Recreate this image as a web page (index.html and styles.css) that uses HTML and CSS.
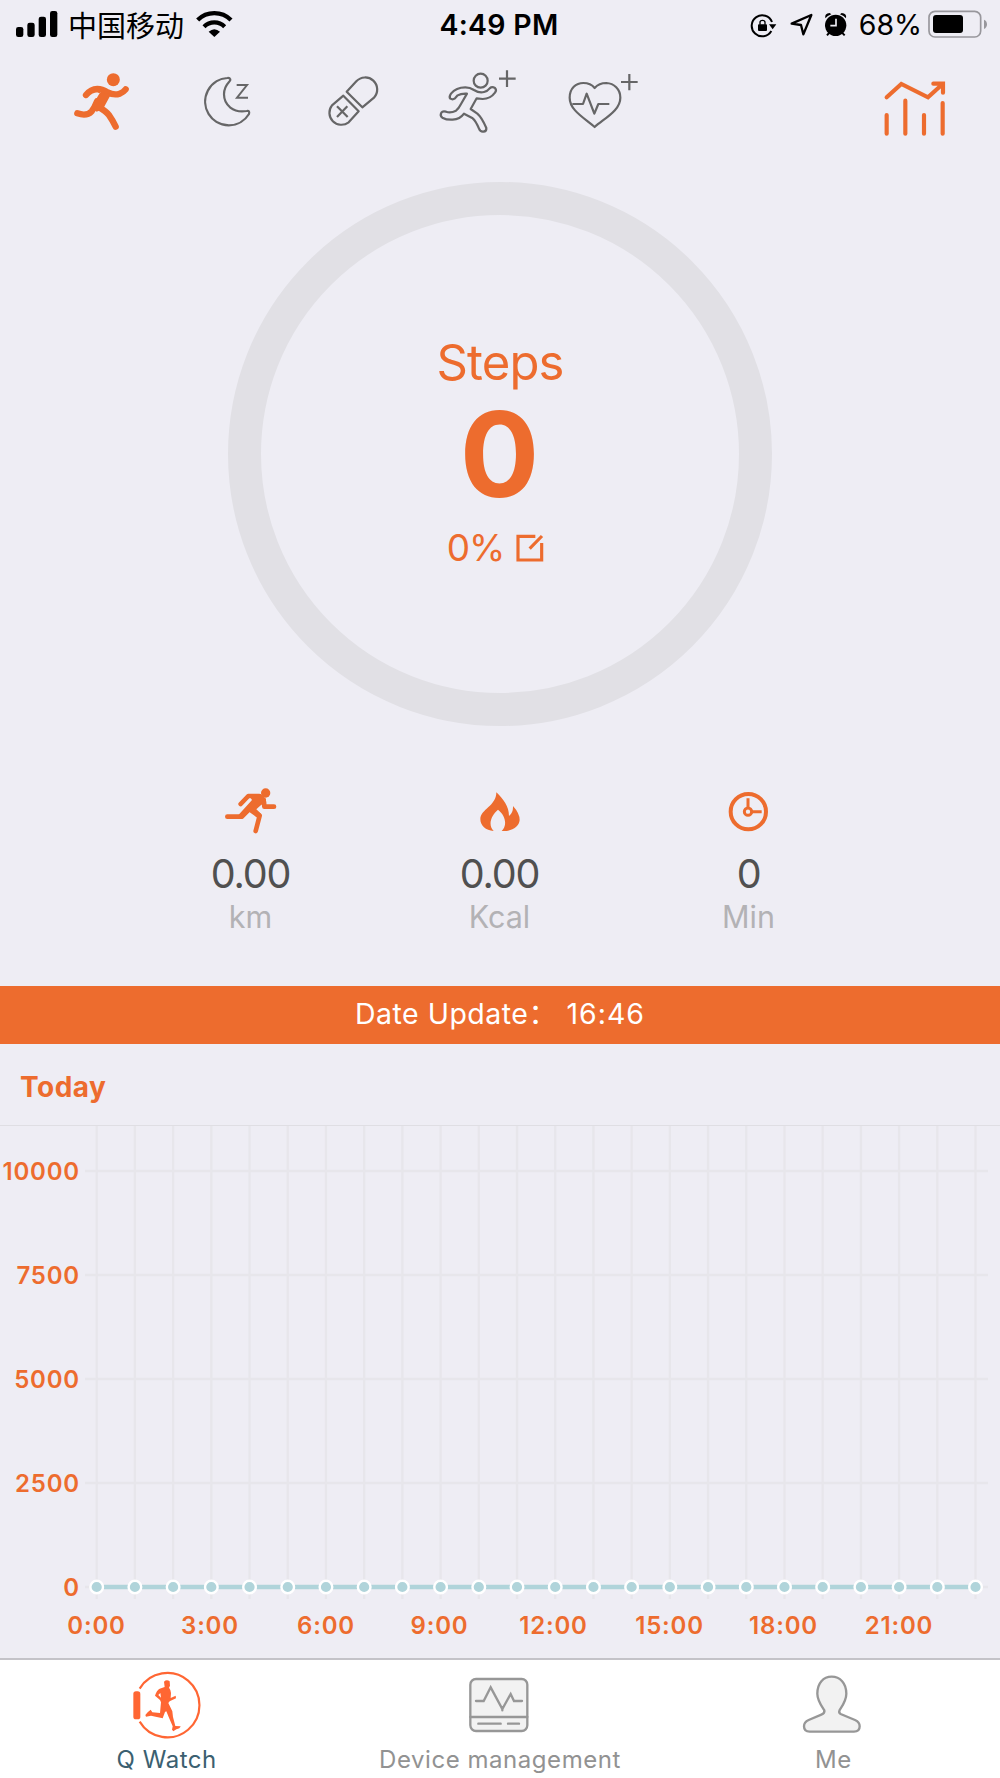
FILE: index.html
```html
<!DOCTYPE html>
<html lang="en">
<head>
    <meta charset="UTF-8">
    <meta name="viewport" content="width=device-width, initial-scale=1.0">
    <title>Q Watch</title>
    <link rel="stylesheet" href="styles.css">
</head>
<body>
    <header class="status-bar">
        <div class="status-left">
            <svg class="signal" viewBox="45 0 132 150">
                <rect x="48" y="81" width="22" height="30" rx="7"/>
                <rect x="82" y="68" width="22" height="43" rx="7"/>
                <rect x="116" y="50" width="22" height="61" rx="7"/>
                <rect x="150" y="33" width="22" height="78" rx="7"/>
            </svg>
            <span class="carrier">中国移动</span>
            <svg class="wifi" viewBox="585 0 117 150">
                <path class="wifi-arc" d="M593 60A71 71 0 0 1 693 60M612 80A44 44 0 0 1 674 80"/>
                <path d="M643 111L626 95Q643 80 660 95Z"/>
            </svg>
        </div>
        <div class="time">4:49 PM</div>
        <div class="status-right">
            <svg class="status-icons" viewBox="150 0 294 150">
                <path class="lock-ring" d="M216 66A31.500 31.500 0 1 0 214 93"/>
                <path d="M207 73H229L218 88Z"/>
                <rect x="174" y="73" width="27" height="20" rx="3"/>
                <path class="shackle" d="M180 74V67Q180 61 187.500 61Q195 61 195 67V74"/>
                <path class="location" d="M275 71L334 45L310 103L303 75Z"/>
                <circle cx="407" cy="76" r="32"/>
                <path class="alarm-legs" d="M388 98L381 106M426 98L434 106"/>
                <path d="M376 55Q373 40 389 39L394 43Q382 47 376 55ZM438 55Q441 40 425 39L420 43Q432 47 438 55Z"/>
                <path class="alarm-hands" d="M408 56V77H391"/>
            </svg>
            <span class="battery-text">68%</span>
            <svg class="battery" viewBox="684 0 180 150">
                <rect class="battery-case" x="687" y="34" width="155" height="77" rx="18"/>
                <rect x="699" y="45" width="90" height="54" rx="9"/>
                <path class="battery-cap" d="M852 59Q861 63 861 73Q861 83 852 87Z"/>
            </svg>
        </div>
    </header>

    <nav class="top-nav">
        <svg class="nav-icon active" viewBox="120 150 372 300">
            <circle cx="340" cy="239" r="19.500"/>
            <path class="limb" d="M258 285Q272 268 292 267Q307 267 323 277Q342 287 359 281Q370 277 377 268M232 340Q260 350 275 334Q283 324 291 304M296 321Q318 334 326 344Q338 361 347 380"/>
            <path d="M293 276L333 283L309 327L290 335L274 322L301 276Z"/>
        </svg>
        <svg class="nav-icon outline" viewBox="492 150 372 300">
            <path d="M691 238Q689 233 682 234A71 71 0 1 0 747 342Q750 331 740 333C700 340 672 315 672 283Q672 262 687 246Q692 241 691 238Z"/>
            <path class="thin" d="M710 255H741L711 293H744"/>
        </svg>
        <svg class="nav-icon outline" viewBox="-96 150 372 300">
            <path d="M80 275L109 244A36 36 0 0 1 162 293L127 322Z"/>
            <path d="M70 287L36 316A36 36 0 0 0 86 367L116 334Z"/>
            <path d="M51 319L83 351M82 319L51 351"/>
        </svg>
        <svg class="nav-icon outline" viewBox="276 150 372 300">
            <circle cx="482" cy="242" r="21"/>
            <path d="M391 296Q386 291 393 281Q408 262 436 262Q450 262 462 270Q478 280 492 276Q503 273 509 265Q516 259 525 264Q531 270 525 278Q511 297 488 297L470 295L452 327L472 341Q485 352 499 384Q500 394 490 395Q481 396 477 386Q467 362 458 355L432 341Q420 358 398 359Q380 360 367 353Q359 347 364 338Q368 332 378 335Q392 340 408 332Q416 326 423 312L441 281Q423 280 413 286L405 295Q398 300 391 296Z"/>
            <path d="M537 236H587M561 211V261"/>
        </svg>
        <svg class="nav-icon outline" viewBox="648 150 372 300">
            <path d="M824 381C790 352 749 330 749 293C749 265 768 249 790 249Q812 249 824 264Q837 249 859 249C882 250 901 268 901 293C901 330 858 352 824 381Z"/>
            <path d="M757 312H789L800 281L823 341L835 312H868M903 246H953M928 222V271"/>
        </svg>
        <svg class="nav-icon trend" viewBox="459 150 372 300">
            <path d="M560 345V401M616 302V401M672 345V401M728 309V401"/>
            <path d="M560 292L604 252L684 292L728 252M700 251H729V278"/>
        </svg>
    </nav>

    <section class="ring">
        <div class="ring-title">Steps</div>
        <div class="ring-value">0</div>
        <div class="ring-goal">
            <span>0%</span>
            <svg class="edit" viewBox="342 640 90 90">
                <path d="M403 650H351V721H422V670M386 687L423 649"/>
            </svg>
        </div>
    </section>

    <section class="stats">
        <div class="stat">
            <svg class="stat-icon" viewBox="93 30 180 180">
                <circle cx="227" cy="69" r="14"/>
                <path class="run-limb" d="M152 102L175 78H208M222 96L223 110H252M112 140H155L175 120M185 118L209 137L197 183"/>
                <path d="M174 72H212L228 86V103L214 104L199 118L214 133L204 145L178 126L158 147L146 134L186 90Z"/>
            </svg>
            <div class="stat-value">0.00</div>
            <div class="stat-unit">km</div>
        </div>
        <div class="stat">
            <svg class="stat-icon" viewBox="840 30 180 180">
                <path d="M919 67C940 88 957 108 957 138Q970 128 969 108Q989 130 989 150C987 173 962 185 935 183C952 168 948 137 924 119C903 136 893 166 911 183C887 181 871 167 871 147C872 118 919 108 919 67Z"/>
            </svg>
            <div class="stat-value">0.00</div>
            <div class="stat-unit">Kcal</div>
        </div>
        <div class="stat">
            <svg class="stat-icon clock" viewBox="536 30 180 180">
                <circle class="clock-face" cx="624" cy="125" r="53"/>
                <circle cx="623" cy="125" r="11"/>
                <path d="M623 114V85M634 125H664"/>
            </svg>
            <div class="stat-value">0</div>
            <div class="stat-unit">Min</div>
        </div>
    </section>

    <div class="update-bar">Date Update：<span class="update-time">16:46</span></div>

    <h2 class="chart-title">Today</h2>

    <svg class="chart" viewBox="0 1126 1000 532">
        <g id="grid" class="grid"></g>
        <g class="y-labels">
            <text x="80" y="1180">10000</text>
            <text x="80" y="1284">7500</text>
            <text x="80" y="1388">5000</text>
            <text x="80" y="1492">2500</text>
            <text x="80" y="1596">0</text>
        </g>
        <g id="points" class="points"></g>
        <g class="x-labels">
            <text x="96.500" y="1634">0:00</text>
            <text x="210" y="1634">3:00</text>
            <text x="326" y="1634">6:00</text>
            <text x="439.500" y="1634">9:00</text>
            <text x="553.500" y="1634">12:00</text>
            <text x="669.500" y="1634">15:00</text>
            <text x="783.500" y="1634">18:00</text>
            <text x="899" y="1634">21:00</text>
        </g>
    </svg>

    <footer class="tab-bar">
        <div class="tab selected">
            <svg class="tab-icon watch" viewBox="380 360 240 240">
                <path class="watch-ring" d="M418 446A96.500 96.500 0 1 1 418 545"/>
                <rect x="399" y="454" width="21" height="84" rx="8"/>
                <path d="M491 425Q499 417 508 424L509 437L506 443L510 450L512 459L511 474L526 467L527 475L508 484L504 489L516 514L518 531L525 558L541 559Q539 566 528 568L519 574L515 569L517 559L505 531L498 514L494 516L487 535L452 527L437 530L435 525L442 517L451 509L456 517L479 519L482 487L479 480L464 467Q469 451 478 446L493 441Z"/>
                <path class="arm-gap" d="M474 465L480 459L482 473Z"/>
            </svg>
            <span>Q Watch</span>
        </div>
        <div class="tab">
            <svg class="tab-icon line" viewBox="390 360 240 240">
                <rect x="421" y="417" width="171" height="156" rx="17"/>
                <path d="M421 531H592M445 551H512M534 551H567"/>
                <path class="pulse" d="M438 483H461L482 442L517 507L542 462L552 483H576M517 503V511"/>
            </svg>
            <span>Device management</span>
        </div>
        <div class="tab">
            <svg class="tab-icon line" viewBox="370 360 240 240">
                <path d="M464 511Q466 520 455 524L417 540Q403 546 403 559Q403 575 420 575H553Q570 575 570 559Q570 546 556 540L513 522Q506 518 510 510C521 493 530 481 530 461C530 429 511 410 486 410C461 410 443 429 443 461C443 481 454 496 464 511Z"/>
            </svg>
            <span>Me</span>
        </div>
    </footer>

    <script src="script.js"></script>
</body>
</html>
```
FILE: styles.css
```css
* {
    box-sizing: border-box;
}
body {
    margin: 0;
    width: 1000px;
    height: 1778px;
    overflow: hidden;
    background-color: #eeedf4;
    font-family: Inter, "Liberation Sans", "Noto Sans CJK SC", sans-serif;
    color: #ed6c2e;
    display: flex;
    flex-direction: column;
}
svg {
    display: block;
    flex: none;
}
.status-bar {
    height: 50px;
    display: grid;
    grid-template-columns: 1fr auto 1fr;
    align-items: center;
    color: #000;
    font-size: 28.5px;
    line-height: 50px;
}
.status-left,
.status-right {
    display: flex;
    align-items: center;
    height: 50px;
}
.status-left {
    padding-left: 15px;
}
.status-right {
    justify-content: flex-end;
    padding-right: 12px;
}
.signal {
    width: 44px;
    height: 50px;
}
.carrier {
    font-family: "Noto Sans CJK SC", sans-serif;
    font-size: 29px;
    line-height: 48px;
    height: 50px;
    margin-left: 9px;
}
.wifi {
    width: 39px;
    height: 50px;
    margin-left: 11px;
}
.wifi-arc {
    fill: none;
    stroke: #000;
    stroke-width: 13;
}
.time {
    padding-right: 2px;
    font-weight: 600;
    letter-spacing: 0.3px;
}
.status-icons {
    width: 98px;
    height: 50px;
}
.lock-ring,
.shackle,
.location,
.alarm-legs {
    fill: none;
    stroke: #000;
    stroke-width: 6;
}
.shackle {
    stroke-width: 4;
}
.location {
    stroke-width: 7;
    stroke-linejoin: round;
}
.alarm-hands {
    fill: none;
    stroke: #eeedf4;
    stroke-width: 5;
}
.battery-text {
    margin-left: 11px;
}
.battery {
    width: 60px;
    height: 50px;
    margin-left: 6px;
}
.battery-case {
    fill: none;
    stroke: #98979c;
    stroke-width: 5;
}
.battery-cap {
    fill: #98979c;
}
.top-nav {
    height: 100px;
    padding: 0 23px 0 40px;
    display: flex;
}
.nav-icon {
    width: 124px;
    height: 100px;
}
.nav-icon.active {
    fill: #ed6c2e;
}
.limb {
    fill: none;
    stroke: #ed6c2e;
    stroke-width: 19;
    stroke-linecap: round;
}
.outline {
    fill: none;
    stroke: #666667;
    stroke-width: 6.6;
    stroke-linejoin: round;
}
.thin {
    stroke-width: 6;
    stroke-linejoin: miter;
}
.trend {
    margin-left: auto;
    fill: none;
    stroke: #ed6c2e;
    stroke-width: 12.5;
    stroke-linecap: round;
}
.ring {
    width: 544px;
    height: 544px;
    margin: 32px auto 0;
    border: 33px solid #e1e0e5;
    border-radius: 50%;
    display: flex;
    flex-direction: column;
    align-items: center;
    flex: none;
}
.ring-title {
    margin-top: 118px;
    font-size: 49px;
    line-height: 60px;
    letter-spacing: -0.9px;
}
.ring-value {
    margin-top: 1px;
    font-size: 118px;
    line-height: 120px;
    font-weight: 700;
    padding-right: 1px;
}
.ring-goal {
    margin-top: 12px;
    padding-right: 8px;
    display: flex;
    align-items: center;
    gap: 11px;
    font-size: 37px;
    font-weight: 400;
    line-height: 44px;
    letter-spacing: -1px;
}
.edit {
    width: 30px;
    height: 30px;
    fill: none;
    stroke: #ed6c2e;
    stroke-width: 9.5;
}
.stats {
    height: 206px;
    margin-top: 54px;
    padding: 0 127px 0 126px;
    display: grid;
    grid-template-columns: repeat(3, 1fr);
    flex: none;
}
.stat {
    display: flex;
    flex-direction: column;
    align-items: center;
}
.stat-icon {
    width: 60px;
    height: 60px;
    fill: #ed6c2e;
}
.run-limb {
    fill: none;
    stroke: #ed6c2e;
    stroke-width: 14;
    stroke-linecap: round;
    stroke-linejoin: round;
}
.stat-icon.clock {
    fill: none;
    stroke: #ed6c2e;
    stroke-width: 9;
}
.clock-face {
    stroke-width: 12;
}
.stat-value {
    margin-top: 10px;
    font-size: 39.5px;
    line-height: 48px;
    letter-spacing: -1.2px;
    color: #505050;
}
.stat-unit {
    margin-top: -1px;
    font-size: 30.5px;
    line-height: 40px;
    color: #b3b2b5;
}
.update-bar {
    height: 58px;
    background-color: #ed6c2e;
    color: #fff;
    font-size: 28.5px;
    line-height: 56px;
    letter-spacing: 0.5px;
    text-align: center;
    overflow: hidden;
    flex: none;
}
.update-time {
    margin-left: 9px;
    letter-spacing: 1px;
}
.chart-title {
    height: 82px;
    margin: 0;
    padding-left: 20px;
    border-bottom: 1px solid #dfdee3;
    font-size: 28px;
    line-height: 87px;
    letter-spacing: 0.5px;
    font-weight: 700;
    flex: none;
}
.chart {
    width: 1000px;
    height: 532px;
    font-size: 24px;
    font-weight: 600;
}
.chart text {
    fill: #ed6c2e;
    letter-spacing: 0.8px;
}
.y-labels {
    text-anchor: end;
}
.x-labels {
    text-anchor: middle;
}
.grid {
    stroke: #e7e6eb;
    stroke-width: 2.3;
}
.points line {
    stroke: #b0d4da;
    stroke-width: 4.5;
}
.points circle {
    fill: #b0d4da;
    stroke: #fff;
    stroke-width: 2.4;
}
.tab-bar {
    height: 120px;
    border-top: 2px solid #c4c3c8;
    background-color: #fff;
    display: grid;
    grid-template-columns: repeat(3, 1fr);
    flex: none;
}
.tab {
    display: flex;
    flex-direction: column;
    align-items: center;
    font-size: 24px;
    line-height: 30px;
    letter-spacing: 0.55px;
    color: #929292;
}
.tab.selected {
    color: #3b6070;
}
.tab-icon {
    width: 80px;
    height: 80px;
    margin-bottom: 5px;
}
.watch {
    fill: #ff6633;
}
.watch-ring {
    fill: none;
    stroke: #ff6633;
    stroke-width: 6.5;
}
.arm-gap {
    fill: #fff;
}
.line {
    fill: #f2f2f2;
    stroke: #979797;
    stroke-width: 7;
    stroke-linecap: round;
}
.pulse {
    fill: none;
}
```
FILE: script.js
```js
const svgNS = 'http://www.w3.org/2000/svg';
const grid = document.getElementById('grid');
const points = document.getElementById('points');
const baseline = 1587;
const startX = 96.7;
const step = 38.21;

function addLine(parent, x1, y1, x2, y2) {
    const line = document.createElementNS(svgNS, 'line');
    line.setAttribute('x1', x1);
    line.setAttribute('y1', y1);
    line.setAttribute('x2', x2);
    line.setAttribute('y2', y2);
    parent.appendChild(line);
}

// horizontal lines, one for each 2500 steps
for (let i = 0; i <= 4; i++) {
    addLine(grid, 85, baseline - i * 104, 988, baseline - i * 104);
}

// one vertical line and one point per hour
for (let hour = 0; hour < 24; hour++) {
    const x = startX + hour * step;
    addLine(grid, x, 1126, x, 1599);
    if (hour < 23) {
        addLine(points, x + 7, baseline, x + step - 7, baseline);
    }
    const dot = document.createElementNS(svgNS, 'circle');
    dot.setAttribute('cx', x);
    dot.setAttribute('cy', baseline);
    dot.setAttribute('r', 6.3);
    points.appendChild(dot);
}
```
